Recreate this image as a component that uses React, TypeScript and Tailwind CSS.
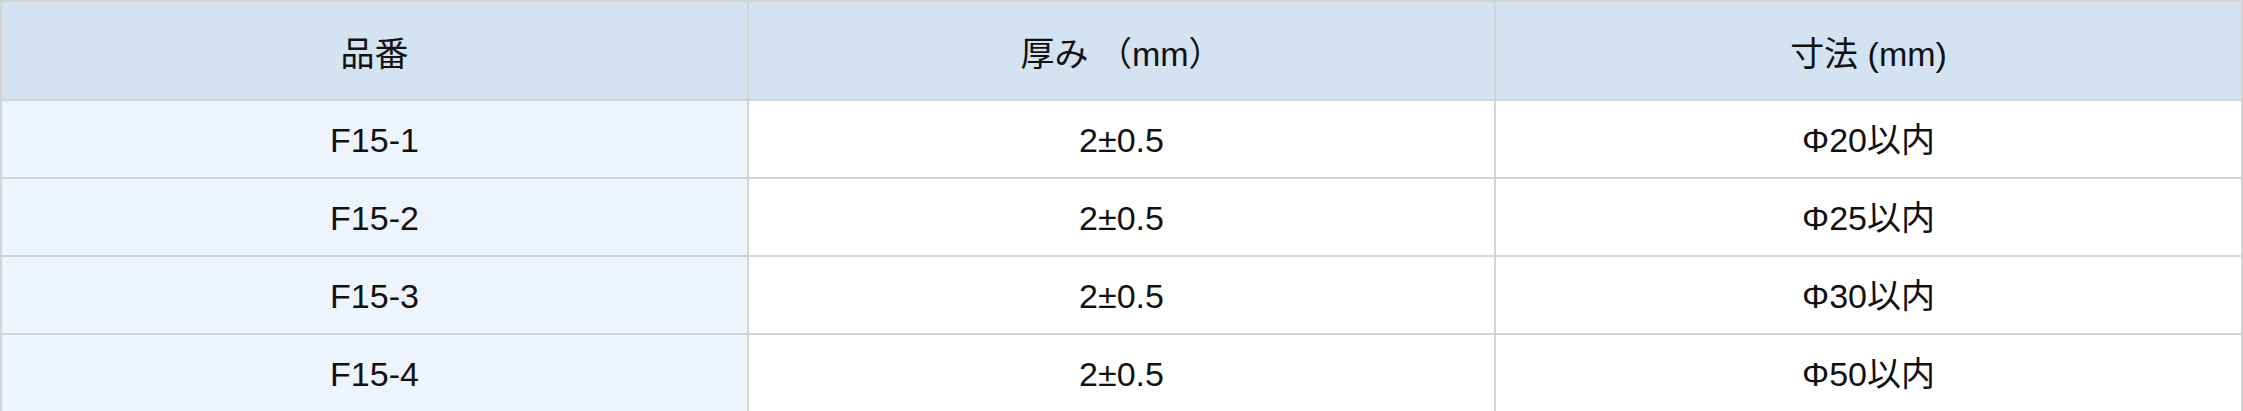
const rows = [
  { code: 'F15-1', thickness: '2±0.5', size: 'Φ20以内' },
  { code: 'F15-2', thickness: '2±0.5', size: 'Φ25以内' },
  { code: 'F15-3', thickness: '2±0.5', size: 'Φ30以内' },
  { code: 'F15-4', thickness: '2±0.5', size: 'Φ50以内' },
]

export default function App() {
  return (
    <div
      className="w-[2243px] bg-white text-[#111] text-[34px]"
      style={{ fontFamily: '"Liberation Sans", "Noto Sans CJK JP", sans-serif' }}
    >
      <table className="w-full table-fixed border-collapse border-2 border-[#d4d4d4]">
        <thead>
          <tr className="h-[99px] bg-[#d3e3f2]">
            <th className="border-2 border-[#d4d4d4] pt-[8px] font-normal text-center">品番</th>
            <th className="border-2 border-[#d4d4d4] pt-[8px] font-normal text-center">厚み （mm）</th>
            <th className="border-2 border-[#d4d4d4] pt-[8px] font-normal text-center">寸法 (mm)</th>
          </tr>
        </thead>
        <tbody>
          {rows.map((r) => (
            <tr key={r.code} className="h-[78px]">
              <td className="border-2 border-[#d4d4d4] bg-[#edf4fb] pt-[3px] text-center">{r.code}</td>
              <td className="border-2 border-[#d4d4d4] pt-[3px] text-center">{r.thickness}</td>
              <td className="border-2 border-[#d4d4d4] pt-[3px] text-center">{r.size}</td>
            </tr>
          ))}
        </tbody>
      </table>
    </div>
  )
}
